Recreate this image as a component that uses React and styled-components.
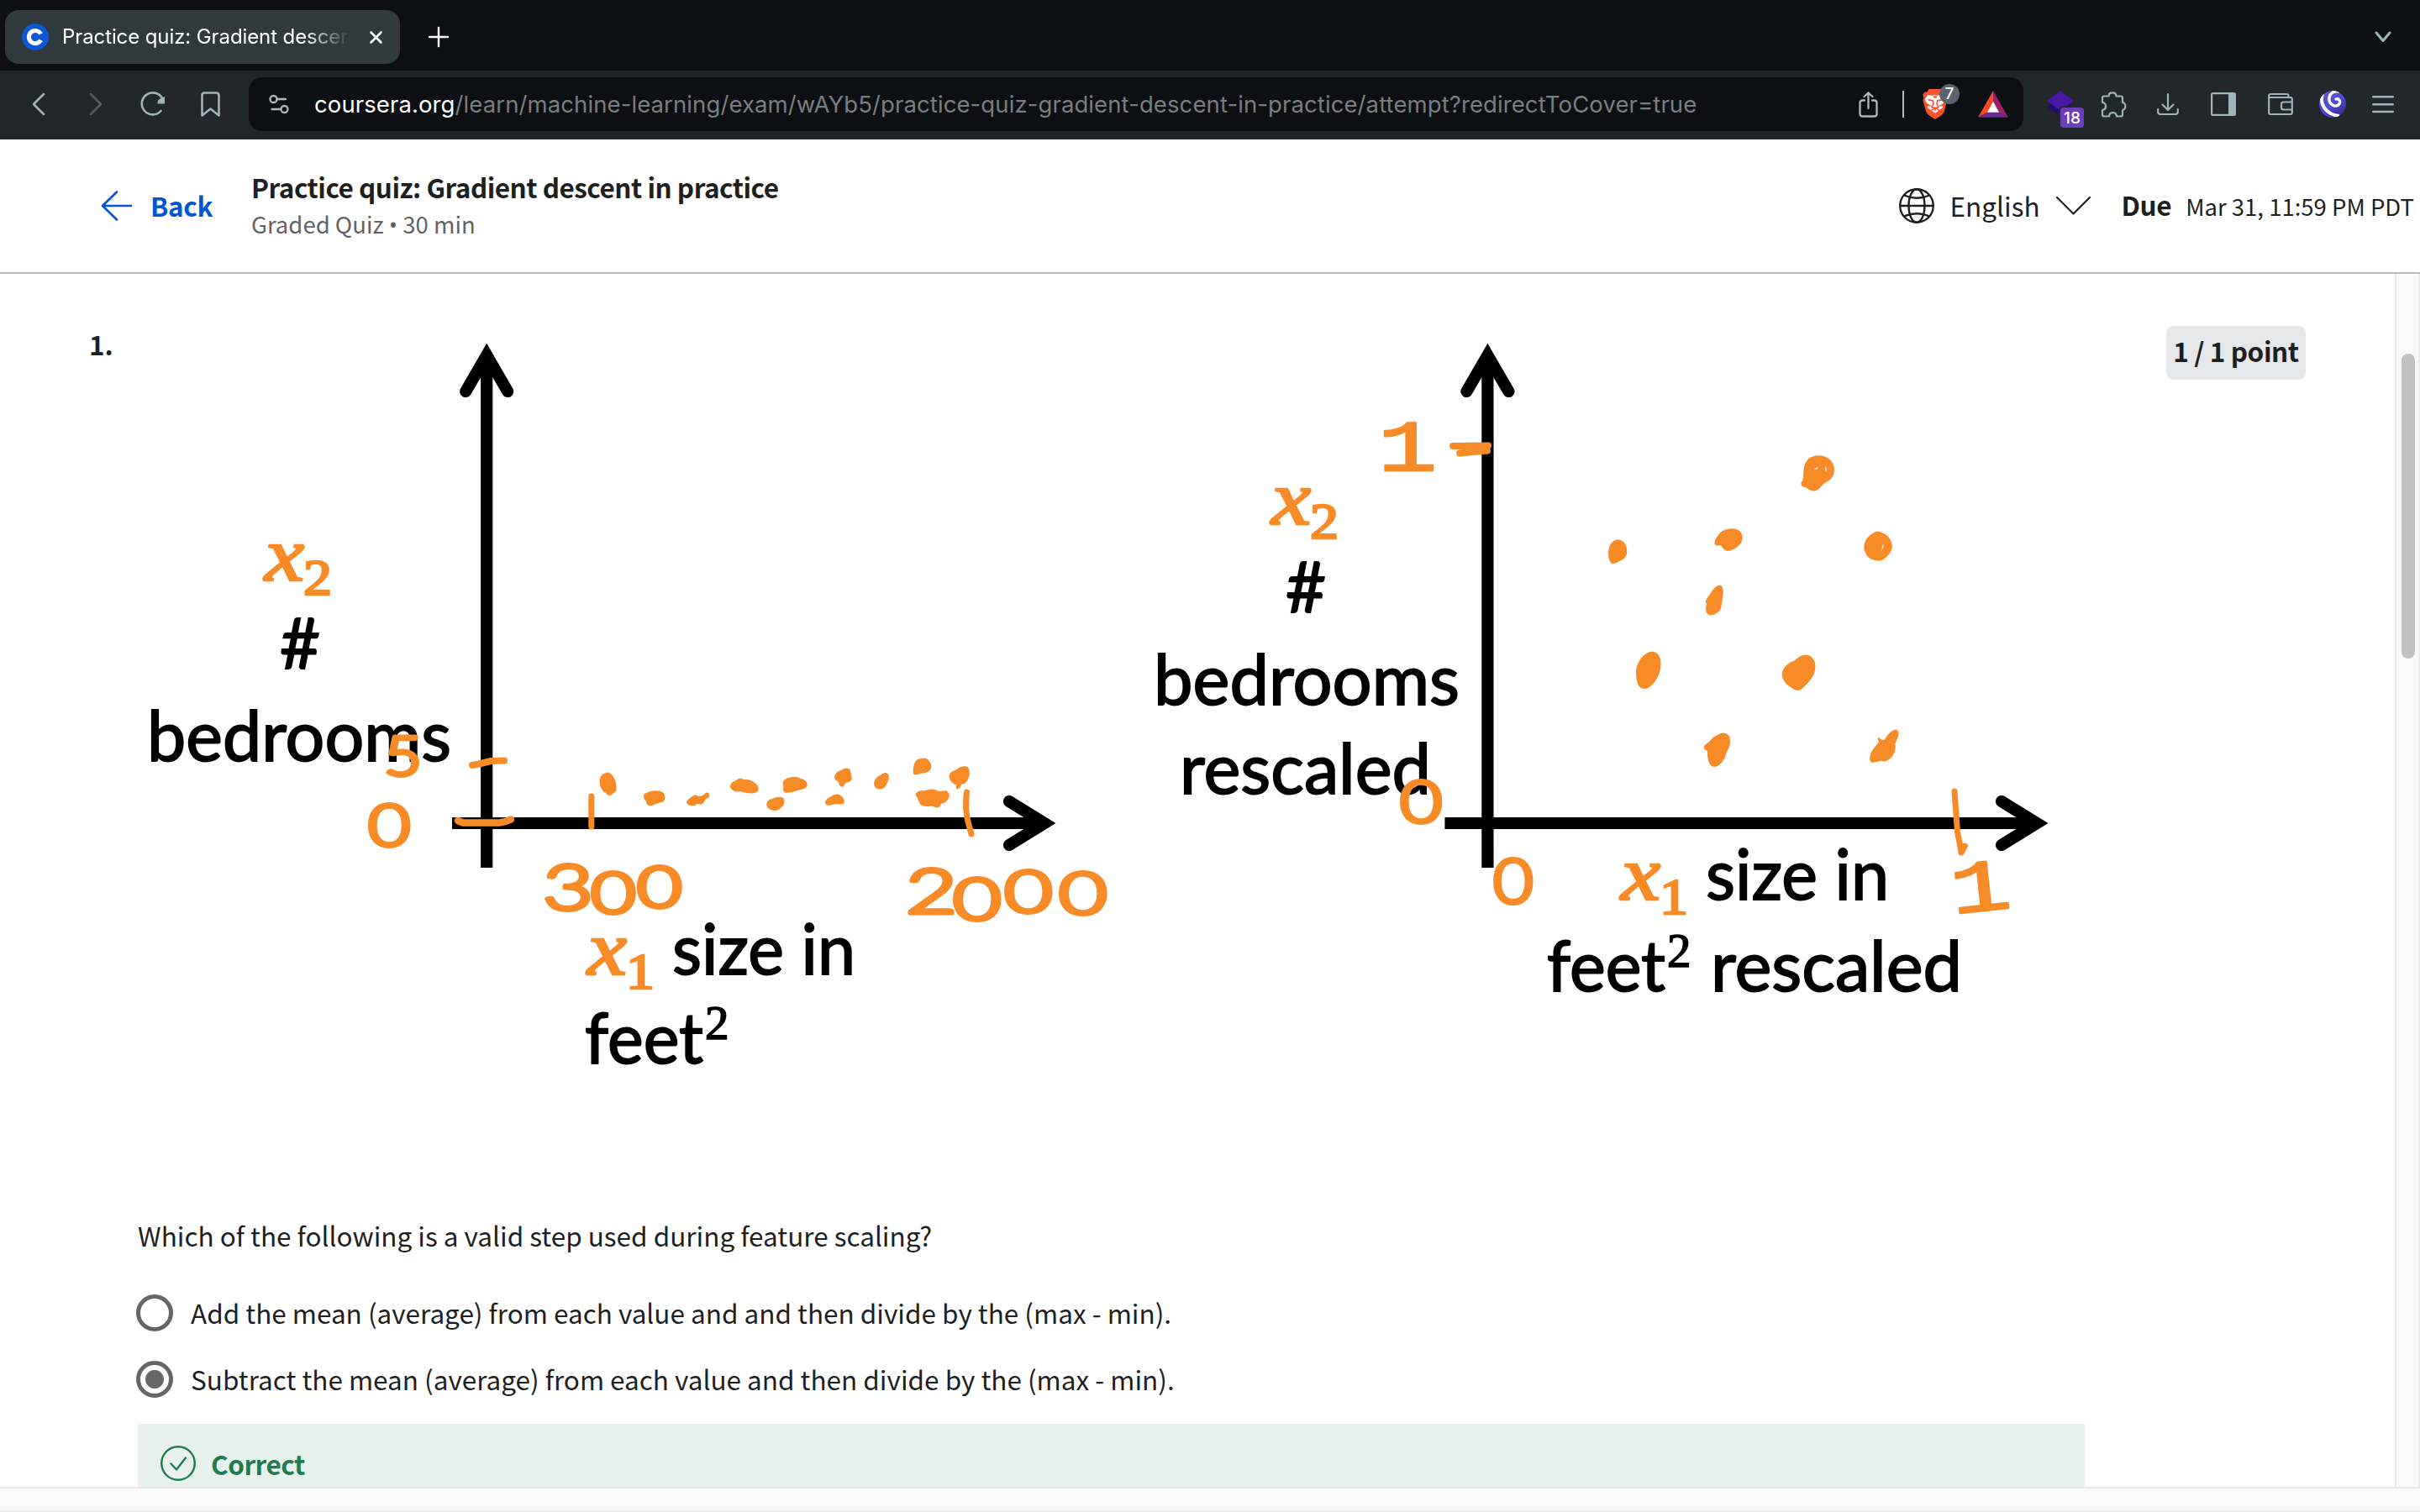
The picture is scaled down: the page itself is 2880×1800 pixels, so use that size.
import React from "react";
import styled, { createGlobalStyle } from "styled-components";

const SANS = '"Noto Sans CJK SC", "Noto Sans", sans-serif';
const CHROME = 'Inter, "Liberation Sans", sans-serif';
const ORANGE = "#f78b28";
const ICON = "#a0b2ba";

const GlobalStyle = createGlobalStyle`
  * { box-sizing: border-box; }
  body { margin: 0; background: #fff; overflow: hidden; }
  svg { display: block; flex: none; overflow: visible; }
`;

const Window = styled.div`
  width: 2880px;
  height: 1800px;
  display: flex;
  flex-direction: column;
  overflow: hidden;
  background: #fff;
  color: #1f1f1f;
  font-family: ${SANS};
`;

/* ---------- browser chrome ---------- */

const TabStrip = styled.div`
  height: 84px;
  flex: none;
  display: flex;
  align-items: center;
  padding: 4px 34px 0 6px;
  background: #0d0f14;
  font-family: ${CHROME};
`;

const Tab = styled.div`
  width: 470px;
  height: 64px;
  display: flex;
  align-items: center;
  padding: 0 20px;
  border-radius: 16px;
  background: #30393e;
`;

const TabTitle = styled.div`
  width: 342px;
  margin: 0 24px 0 16px;
  overflow: hidden;
  white-space: nowrap;
  color: #fff;
  font-size: 24px;
  line-height: 32px;
  letter-spacing: ${(p) => p.$spacing}px;
  mask-image: linear-gradient(to right, #000 84%, transparent 100%);
`;

const NewTab = styled.div`
  margin-left: 34px;
  flex: 1;
`;

const Toolbar = styled.div`
  height: 82px;
  flex: none;
  display: flex;
  align-items: center;
  padding-bottom: 2px;
  background: #22272b;
  font-family: ${CHROME};
`;

const NavButtons = styled.div`
  width: 296px;
  padding-left: 38px;
  display: flex;
  align-items: center;
`;

const Slot = styled.div`
  margin-left: ${(p) => p.$gap || 0}px;
  position: relative;
`;

const AddressBar = styled.div`
  width: 2112px;
  height: 64px;
  display: flex;
  align-items: center;
  padding: 0 18px 0 24px;
  border-radius: 16px;
  background: #0d0f14;
`;

const Url = styled.div`
  flex: 1;
  margin-left: 30px;
  white-space: nowrap;
  color: #7c7d80;
  font-size: 27.5px;
  line-height: 40px;
  letter-spacing: 0.1px;
`;

const Domain = styled.span`
  color: #fff;
`;

const Divider = styled.div`
  width: 2px;
  height: 32px;
  margin: 0 22px 0 29px;
  background: #b4b6b8;
`;

const CountBadge = styled.div`
  position: absolute;
  left: ${(p) => p.$left}px;
  top: ${(p) => p.$top}px;
  width: ${(p) => p.$width}px;
  height: 24px;
  border-radius: ${(p) => p.$radius}px;
  background: ${(p) => p.$color};
  color: #fff;
  font-size: ${(p) => p.$size}px;
  font-weight: 500;
  line-height: ${(p) => p.$line || 24}px;
  text-align: center;
  ${(p) => p.$outline && "box-shadow: 0 0 0 2px #22272b;"}
`;

/* ---------- page header ---------- */

const Header = styled.header`
  height: 160px;
  flex: none;
  display: flex;
  align-items: center;
  padding-left: 120px;
  border-bottom: 2px solid #bbb;
  white-space: nowrap;
`;

const Label = styled.div`
  font-size: ${(p) => p.$size || 31.5}px;
  line-height: ${(p) => p.$line || 44}px;
  font-weight: ${(p) => p.$weight || 400};
  letter-spacing: ${(p) => p.$spacing || 0}px;
  color: ${(p) => p.$color || "#1f1f1f"};
  white-space: nowrap;
`;

const CenteredLabel = styled(Label)`
  padding-bottom: 2px;
`;

const Bullet = styled.span`
  font-family: "Open Sans", sans-serif;
`;

const BackLink = styled.div`
  width: 179px;
  display: flex;
  align-items: center;
  gap: 22px;
`;

const TitleBlock = styled.div`
  flex: 1;
`;

const Language = styled.div`
  display: flex;
  align-items: center;
  gap: 19px;
`;

const Due = styled.div`
  display: flex;
  align-items: baseline;
  gap: 17px;
  margin: 0 7px 0 37px;
`;

/* ---------- quiz body ---------- */

const Body = styled.div`
  flex: 1;
  min-height: 0;
  display: flex;
`;

const Content = styled.main`
  flex: 1;
  min-width: 0;
  display: grid;
  grid-template-columns: 58px 2317px 97px 166px;
  align-items: start;
  align-content: start;
  padding: 62px 0 0 106px;
  overflow: hidden;
`;

const PointBadge = styled.div`
  grid-column: 4;
  height: 64px;
  display: flex;
  align-items: center;
  justify-content: center;
  padding-bottom: 6px;
  border-radius: 8px;
  background: #e5e7e8;
`;

const Question = styled.section`
  grid-column: 2;
  display: flex;
  flex-direction: column;
`;

const Prompt = styled.div`
  margin-top: 60px;
`;

const Options = styled.div`
  display: flex;
  flex-direction: column;
  gap: 35px;
  margin: 49px 0 31px -2px;
`;

const Option = styled.div`
  height: 44px;
  display: flex;
  align-items: center;
  gap: 21px;
`;

const OptionText = styled(Label)`
  padding-bottom: 3px;
`;

const Radio = styled.div`
  width: 44px;
  height: 44px;
  display: flex;
  align-items: center;
  justify-content: center;
  border: 5px solid #666;
  border-radius: 50%;

  &::after {
    content: "";
    width: 22px;
    height: 22px;
    border-radius: 50%;
    background: ${(p) => (p.$checked ? "#666" : "transparent")};
  }
`;

const Feedback = styled.div`
  height: 140px;
  display: flex;
  align-items: flex-start;
  gap: 18px;
  padding: 26px 27px;
  background: #e7f1ed;
`;

const ScrollTrack = styled.div`
  width: 30px;
  padding: 95px 4px 0 6px;
  border-left: 2px solid #e8e8e8;
  border-right: 2px solid #eee;
  background: #fafafa;
`;

const ScrollThumb = styled.div`
  width: 16px;
  height: 363px;
  border-radius: 8px;
  background: #c1c1c1;
`;

const BottomTrack = styled.div`
  height: 30px;
  flex: none;
  border-top: 2px solid #e8e8e8;
  border-bottom: 2px solid #eee;
  background: #fafafa;
`;

/* ---------- icons ---------- */

const Svg = ({ w, h, children, stroke = ICON, sw = 2, box }) => (
  <svg
    width={w}
    height={h}
    viewBox={box || `0 0 ${w} ${h}`}
    fill="none"
    stroke={stroke}
    strokeWidth={sw}
    strokeLinecap="round"
    strokeLinejoin="round"
  >
    {children}
  </svg>
);

const CourseraMark = () => (
  <svg width="32" height="32" viewBox="0 0 32 32">
    <circle cx="16" cy="16" r="16" fill="#0d59d3" />
    <path d="M22.6 12.4A7.6 7.6 0 1 0 22.6 19.8" fill="none" stroke="#fff" strokeWidth="5" />
  </svg>
);

const BraveLion = () => (
  <svg width="30" height="36" viewBox="0 0 88 108">
    <path
      d="M22 0H66L76 11L84 10L88 22L84 32L86 42L76 82Q72 90 64 95L48 106Q44 109 40 106L24 95Q16 90 12 82L0 40L3 32L0 20L8 10L14 11Z"
      fill="#fb542b"
    />
    <path
      d="M18 20L36 23L44 20L52 23L70 20L80 36L77 46L66 56L72 66L60 74L44 86L28 74L16 66L22 56L11 46L8 36Z"
      fill="#fff"
    />
    <path
      d="M19 38L36 42L38 53L32 64L44 70L56 64L50 53L52 42L69 38M44 70V78M28 61L20 57M60 61L68 57M30 76L44 67L58 76"
      fill="none"
      stroke="#fb542b"
      strokeWidth="5"
    />
    <path d="M36 26L44 24L52 26L48 32H40Z" fill="#fb542b" />
  </svg>
);

const BatTriangle = () => (
  <svg width="36" height="32" viewBox="0 0 108 95">
    <path d="M54 0L0 95L34 77L54 37Z" fill="#ff4724" />
    <path d="M54 0L108 95L74 77L54 37Z" fill="#9e1f63" />
    <path d="M0 95H108L74 77H34Z" fill="#662d91" />
    <path d="M54 37L33 77H75Z" fill="#fff" />
  </svg>
);

const Swirl = () => (
  <svg width="32" height="32" viewBox="0 0 96 96">
    <defs>
      <clipPath id="ball">
        <circle cx="48" cy="48" r="48" />
      </clipPath>
      <linearGradient id="ballFill" x1="0" y1="0" x2="0.7" y2="1">
        <stop offset="0" stopColor="#6f4fd0" />
        <stop offset="0.55" stopColor="#4d4fd2" />
        <stop offset="1" stopColor="#3c2a93" />
      </linearGradient>
    </defs>
    <g clipPath="url(#ball)">
      <rect width="96" height="96" fill="url(#ballFill)" />
      <path
        d="M60 30C68 27 75 34 74 42C72 54 56 58 46 50C32 40 32 18 46 8C52 3 60 1 68 3"
        fill="none"
        stroke="#fff"
        strokeWidth="10"
        strokeLinecap="round"
      />
      <path d="M12 12C0 52 28 86 72 90" fill="none" stroke="#fff" strokeWidth="12" />
      <path d="M1 52C6 78 22 92 46 98" fill="none" stroke="#4b43c4" strokeWidth="6" />
    </g>
  </svg>
);

/* ---------- hand-annotated figure ---------- */

const FigureSvg = styled.svg`
  width: 2317px;
  height: 1000px;
`;

const Printed = styled.text`
  font-family: Lato, sans-serif;
  font-size: 83px;
  fill: #000;
  stroke: #000;
  stroke-width: 1.8px;
`;

const MathText = styled.text`
  font-family: "Liberation Serif", serif;
  font-style: ${(p) => (p.$italic ? "italic" : "normal")};
  font-size: ${(p) => p.$size}px;
  fill: ${(p) => p.$color || ORANGE};
  stroke: ${(p) => p.$color || ORANGE};
  stroke-width: ${(p) => (p.$color ? 1.6 : 2.6)}px;
`;

const HandText = styled.text`
  font-family: ${(p) => (p.$base ? '"Liberation Mono", monospace' : "Lato, sans-serif")};
  font-weight: ${(p) => (p.$base ? 400 : 300)};
  font-size: ${(p) => p.$size}px;
  fill: ${ORANGE};
  stroke: ${ORANGE};
  stroke-width: ${(p) => (p.$base ? 2.4 : 5)}px;
  stroke-linejoin: round;
`;

const Word = ({ x, y, w, children }) => (
  <Printed x={x} y={y} textLength={w} lengthAdjust="spacingAndGlyphs">
    {children}
  </Printed>
);

const Variable = ({ x, y, index }) => (
  <g>
    <MathText $italic $size={91} x={x} y={y} textLength={47} lengthAdjust="spacingAndGlyphs">
      x
    </MathText>
    <MathText $size={61} x={x + 46} y={y + 17} textLength={34} lengthAdjust="spacingAndGlyphs">
      {index}
    </MathText>
  </g>
);

/* Handwritten number: one position for each digit, widened by `stretch`. */
const HandNumber = ({ xs, ys, stretch = 1.3, size = 66, base, tilt = 0, lead, children }) => (
  <HandText
    $size={size}
    $base={base}
    transform={`rotate(${tilt} ${xs[0]} ${ys[0]}) scale(${stretch} 1)`}
    x={xs.map((v) => v / stretch).join(" ")}
    y={ys.join(" ")}
  >
    {lead ? (
      <>
        <tspan fontSize={lead}>{children[0]}</tspan>
        {children.slice(1)}
      </>
    ) : (
      children
    )}
  </HandText>
);

const Axes = ({ x, left, right }) => (
  <g fill="none" stroke="#000" strokeWidth="14.2" strokeMiterlimit="10">
    <path d={`M${x} 430V1033`} />
    <path d={`M${left} 980H${right - 20}`} />
    <path d={`M${x - 25} 466L${x} 423L${x + 25} 466`} strokeLinecap="round" />
    <path d={`M${right - 56} 954L${right - 14} 980L${right - 56} 1006`} strokeLinecap="round" />
  </g>
);

const LEFT_DOTS = [
  "M380 238C395 246 401 285 398 305L386 320Q378 322 375 311C360 300 357 258 368 245Z",
  "M470 308Q492 298 503 311Q511 330 502 344Q485 350 476 358Q464 358 465 342Q456 330 461 315Z",
  "M555 341Q560 330 573 319L583 324Q592 322 597 311Q606 309 605 326L596 336Q594 348 587 353L578 351Q572 361 562 356Q553 352 555 341Z",
  "M651 291Q651 275 664 268Q672 253 682 264Q698 262 705 275Q716 284 714 304Q706 316 694 313Q682 312 675 307Q656 310 651 291Z",
  "M732 350Q736 332 746 332Q758 322 770 330Q775 350 766 362Q758 378 746 374Q732 368 732 350Z",
  "M770 290Q764 264 782 258Q796 250 808 260Q824 266 823 286Q816 302 802 302Q788 312 774 311Q766 304 770 290Z",
  "M883 252Q888 234 897 232Q908 218 918 228Q920 244 922 262Q918 276 908 276L902 290Q893 290 892 272Q882 266 883 252Z",
  "M862 346Q864 332 876 324Q888 312 896 320Q908 332 904 350Q896 354 884 351Q874 358 865 355Z",
  "M971 276Q974 254 985 249Q996 232 1003 246Q1006 262 1000 276Q998 292 987 298Q970 300 971 276Z",
  "M1058 226Q1060 194 1072 190Q1086 184 1092 194Q1102 212 1096 230Q1088 242 1074 242Q1064 250 1058 244Z",
  "M1138 256Q1136 238 1152 230Q1168 210 1180 220Q1186 244 1180 262Q1176 280 1165 282Q1162 296 1155 299Q1152 294 1154 284Q1140 274 1138 256Z",
  "M1063 318Q1066 302 1084 304Q1104 292 1114 306L1132 304Q1142 318 1136 332Q1130 350 1120 350Q1116 368 1108 364Q1100 356 1094 360Q1076 362 1072 348Q1070 334 1063 318Z",
];

const RIGHT_DOTS = [
  "M697 500C700 460 730 450 756 456C790 466 798 500 788 522C780 540 760 544 752 556C740 576 722 578 706 562L692 557Q684 548 694 536Z",
  "M419 748Q420 732 430 722C440 700 470 694 488 700C510 710 510 734 500 748C488 764 470 774 456 772Q444 766 440 754L424 754Z",
  "M89 785C88 756 98 740 115 735C135 732 146 750 147 770C148 790 138 802 124 806Q112 818 100 814Q90 808 89 785Z",
  "M884 762C884 740 896 722 914 712Q926 702 940 712C960 718 972 740 972 760C968 780 952 800 934 805C912 804 890 800 884 762Z",
  "M391 942L396 930Q404 918 410 908Q424 884 438 887C450 894 446 924 442 944Q440 970 432 975L418 985Q404 992 394 978Q390 964 395 950Z",
  "M175 1180C174 1150 196 1110 226 1108C252 1110 258 1146 248 1178C238 1210 216 1234 200 1232C182 1230 176 1210 175 1180Z",
  "M629 1184C630 1160 650 1144 668 1138C684 1120 702 1114 716 1122C736 1134 736 1164 728 1184C716 1210 700 1224 688 1234Q676 1242 664 1232C646 1222 630 1206 629 1184Z",
  "M386 1424Q394 1414 404 1408Q412 1392 430 1385Q450 1372 464 1388C472 1410 466 1430 456 1444C452 1470 434 1494 416 1492C400 1488 397 1462 397 1440Q386 1436 386 1424Z",
  "M902 1462C904 1440 920 1424 930 1410L926 1396Q934 1392 938 1402L948 1402C956 1386 972 1368 984 1368Q996 1374 990 1392L981 1416C986 1444 968 1472 946 1474L936 1472Q920 1478 908 1478Q902 1474 902 1462Z",
];

const Figure = () => (
  <FigureSvg viewBox="164 388 2317 1000">
    <Axes x={579.2} left={538} right={1257} />
    <Axes x={1770.4} left={1719.4} right={2438} />

    <Variable x={315} y={690.5} index="2" />
    <Word x={333} y={796} w={48}>#</Word>
    <Word x={175} y={906} w={362}>bedrooms</Word>
    <Variable x={699} y={1160} index="1" />
    <Word x={800} y={1160} w={218}>size in</Word>
    <Word x={696} y={1265.5} w={141}>feet</Word>
    <MathText $color="#000" $size={57} x={839} y={1236.5}>2</MathText>

    <Variable x={1513} y={623.5} index="2" />
    <Word x={1530} y={729} w={48}>#</Word>
    <Word x={1373} y={838.5} w={364}>bedrooms</Word>
    <Word x={1404} y={944.5} w={299}>rescaled</Word>
    <Variable x={1929} y={1070.5} index="1" />
    <Word x={2030} y={1070.5} w={218}>size in</Word>
    <Word x={1841} y={1180} w={141}>feet</Word>
    <MathText $color="#000" $size={57} x={1984} y={1151}>2</MathText>
    <Word x={2036} y={1180} w={299}>rescaled</Word>

    <g fill={ORANGE}>
      <g transform="translate(520 840) scale(0.5357 0.33333)">
        {LEFT_DOTS.map((d) => (
          <path key={d} d={d} />
        ))}
      </g>
      <g transform="translate(1880 380) scale(0.38265 0.35714)">
        {RIGHT_DOTS.map((d) => (
          <path key={d} d={d} />
        ))}
      </g>
    </g>
    <path d="M2159 558l4-2 1 2-4 1zM2172 554q3 4 1 8l-1-3zM2241 647q2 5-3 10 2-4 2-7z" fill="#fde0c2" />

    <g fill="none" stroke={ORANGE} strokeWidth="8" strokeLinecap="round" strokeLinejoin="round">
      <path d="M562 911L570 909.5L584 906L600 905.5" />
      <path d="M545 977L551 979.5L594 979.5Q601 979 608 975.5" strokeWidth="8.5" />
      <path d="M703.8 948L703.8 984" strokeWidth="7" />
      <path d="M1150.5 943Q1148 963 1152 978L1156 993" strokeWidth="7" />
      <path d="M1729 531L1771 530.5M1737 539.5L1770 536.5" />
      <path d="M2326 942L2329.5 990L2334 1015L2338.5 1007L2334 1008" strokeWidth="7" />
    </g>

    <HandNumber xs={[457]} ys={[923]} stretch={1.2} size={65}>5</HandNumber>
    <HandNumber xs={[438]} ys={[1007.5]} stretch={1.28} size={68}>0</HandNumber>
    <HandNumber xs={[646, 703, 758]} ys={[1083, 1087, 1080]} stretch={1.4} size={66} lead={74}>300</HandNumber>
    <HandNumber xs={[1078, 1134, 1195, 1260]} ys={[1087, 1095, 1086, 1088]} stretch={1.44} size={69} lead={73}>
      2000
    </HandNumber>
    <HandNumber xs={[1640]} ys={[560]} stretch={1.36} size={86} base>1</HandNumber>
    <HandNumber xs={[1666]} ys={[979]} stretch={1.26} size={69}>0</HandNumber>
    <HandNumber xs={[1777]} ys={[1075]} stretch={1.14} size={72}>0</HandNumber>
    <HandNumber xs={[2324]} ys={[1088]} stretch={1.36} size={88} tilt={-6} base>1</HandNumber>
  </FigureSvg>
);

export default function App() {
  return (
    <Window>
      <GlobalStyle />
      <TabStrip>
        <Tab>
          <CourseraMark />
          <TabTitle $spacing={-0.1}>Practice quiz: Gradient descent</TabTitle>
          <Svg w={15} h={15} stroke="#fff" sw={2.6}>
            <path d="M1.5 1.5L13.5 13.5M13.5 1.5L1.5 13.5" />
          </Svg>
        </Tab>
        <NewTab>
          <Svg w={24} h={24} stroke="#fff" sw={2.4}>
            <path d="M12 1V23M1 12H23" />
          </Svg>
        </NewTab>
        <Svg w={20} h={14} sw={3}>
          <path d="M2 2L10 11.5L18 2" />
        </Svg>
      </TabStrip>

      <Toolbar>
        <NavButtons>
          <Svg w={16} h={28} sw={2.6}>
            <path d="M14 2L2 14L14 26" />
          </Svg>
          <Slot $gap={52}>
            <Svg w={16} h={28} sw={2.6} stroke="#565e63">
              <path d="M2 2L14 14L2 26" />
            </Svg>
          </Slot>
          <Slot $gap={45}>
            <Svg w={30} h={30} sw={2.6}>
              <path d="M24.5 23A13 13 0 1 1 27.3 11" />
              <path d="M29 6V14.5H20.5Q20 9 25 8Z" fill={ICON} stroke="none" />
            </Svg>
          </Slot>
          <Slot $gap={42}>
            <Svg w={23} h={30} sw={2.6}>
              <path d="M1.5 4.5Q1.5 1.5 4.5 1.5H18.5Q21.5 1.5 21.5 4.5V28.5L11.5 20.5L1.5 28.5Z" />
            </Svg>
          </Slot>
        </NavButtons>
        <AddressBar>
          <Svg w={24} h={24} stroke="#b4b6b8" sw={2.3}>
            <circle cx="5.5" cy="6" r="4" />
            <path d="M9.5 6H20M3.5 18H14" />
            <circle cx="18.5" cy="18" r="4" />
          </Svg>
          <Url>
            <Domain>coursera.org</Domain>
            /learn/machine-learning/exam/wAYb5/practice-quiz-gradient-descent-in-practice/attempt?redirectToCover=true
          </Url>
          <Svg w={23} h={31} stroke="#b4b6b8" sw={2.3}>
            <path d="M7 10.5H4.5Q1.5 10.5 1.5 13.5V26.5Q1.5 29.5 4.5 29.5H18.5Q21.5 29.5 21.5 26.5V13.5Q21.5 10.5 18.5 10.5H16M11.5 20V1.5M6.5 6L11.5 1.5L16.5 6" />
          </Svg>
          <Divider />
          <Slot>
            <BraveLion />
            <CountBadge $left={20} $top={-6} $width={24} $radius={12} $color="#5e6170" $size={19}>
              7
            </CountBadge>
          </Slot>
          <Slot $gap={36}>
            <BatTriangle />
          </Slot>
        </AddressBar>
        <Slot $gap={28}>
          <svg width="32" height="32" viewBox="0 0 32 32">
            <path d="M0 19L6 15H26L32 19L16 31Z" fill="#1f0c6e" />
            <path d="M16 0L32 12L16 24L0 12Z" fill="#4518a5" />
          </svg>
          <CountBadge $left={16} $top={20} $width={28} $radius={4} $color="#6b3fbc" $size={19} $line={26} $outline>
            18
          </CountBadge>
        </Slot>
        <Slot $gap={32}>
          <Svg w={30} h={31} sw={2.2}>
            <path d="M4 5.5H9.5Q9.5 1.3 14 1.3Q18.5 1.3 18.5 5.5H24Q26 5.5 26 7.5V13Q29.3 13.5 29.3 17.5Q29.3 21.5 26 22V27.5Q26 29.5 24 29.5H19Q18.5 25 14.5 25Q10.5 25 10 29.5H4Q2 29.5 2 27.5V22Q6 21.5 6 17.5Q6 13.5 2 13V7.5Q2 5.5 4 5.5Z" />
          </Svg>
        </Slot>
        <Slot $gap={37}>
          <Svg w={26} h={26} sw={2.2}>
            <path d="M13 1V20M6.5 13.5L13 20L19.5 13.5M1.2 19V22Q1.2 25 4.2 25H21.8Q24.8 25 24.8 22V19" />
          </Svg>
        </Slot>
        <Slot $gap={38}>
          <Svg w={30} h={28} sw={2.2}>
            <rect x="1.1" y="1.1" width="27.8" height="25.8" rx="1.5" />
            <rect x="21" y="1" width="8" height="26" fill={ICON} stroke="none" />
          </Svg>
        </Slot>
        <Slot $gap={38}>
          <Svg w={30} h={26} sw={2.2}>
            <path d="M28.8 10V7Q28.8 5 26.8 5H1.2M28.8 20V23Q28.8 25 26.8 25H3.2Q1.2 25 1.2 23V3Q1.2 1 3.2 1H22.5Q24.5 1 24.5 3V5M28.8 10.5H18.5Q16 10.5 16 13V17Q16 19.5 18.5 19.5H28.8Z" />
          </Svg>
        </Slot>
        <Slot $gap={31}>
          <Swirl />
        </Slot>
        <Slot $gap={31}>
          <Svg w={26} h={20} sw={2.4}>
            <path d="M1.2 1.2H24.8M1.2 10.2H24.8M1.2 19H24.8" />
          </Svg>
        </Slot>
      </Toolbar>

      <Header>
        <BackLink>
          <Svg w={37} h={36} stroke="#0056d2" sw={2.6}>
            <path d="M19 1.5L2 18L19 34.5M2 18H36" />
          </Svg>
          <CenteredLabel $weight={700} $color="#0056d2" $spacing={-0.4}>
            Back
          </CenteredLabel>
        </BackLink>
        <TitleBlock>
          <Label $weight={700} $spacing={-0.5} $line={43}>
            Practice quiz: Gradient descent in practice
          </Label>
          <Label $size={27.5} $line={45} $color="#636363">
            Graded Quiz <Bullet>•</Bullet> 30 min
          </Label>
        </TitleBlock>
        <Language>
          <Svg w={42} h={42} stroke="#1f1f1f" sw={2.4}>
            <circle cx="21" cy="21" r="19.8" />
            <ellipse cx="21" cy="21" rx="9.5" ry="19.8" />
            <path d="M1.5 21H40.5M6 8.5Q21 15 36 8.5M6 33.5Q21 27 36 33.5" />
          </Svg>
          <CenteredLabel>English</CenteredLabel>
          <Svg w={41} h={22} stroke="#1f1f1f" sw={2.2}>
            <path d="M1 1L20.5 20.5L40 1" />
          </Svg>
        </Language>
        <Due>
          <CenteredLabel $weight={700} $spacing={-0.4}>Due</CenteredLabel>
          <CenteredLabel $size={27.5}>Mar 31, 11:59 PM PDT</CenteredLabel>
        </Due>
      </Header>

      <Body>
        <Content>
          <Label $weight={700} $line={42}>1.</Label>
          <Question>
            <Figure />
            <Prompt>
              <Label>Which of the following is a valid step used during feature scaling?</Label>
            </Prompt>
            <Options>
              <Option>
                <Radio />
                <OptionText>Add the mean (average) from each value and and then divide by the (max - min).</OptionText>
              </Option>
              <Option>
                <Radio $checked />
                <OptionText>Subtract the mean (average) from each value and then divide by the (max - min).</OptionText>
              </Option>
            </Options>
            <Feedback>
              <Svg w={42} h={42} stroke="#1d7c50" sw={2.4}>
                <circle cx="21" cy="21" r="19.8" />
                <path d="M12.5 21.5L19 28.5L30 14.5" />
              </Svg>
              <Label $weight={700} $color="#1d7c50" $spacing={-0.5} $line={42}>
                Correct
              </Label>
            </Feedback>
          </Question>
          <PointBadge>
            <Label $weight={700} $spacing={-0.4}>1 / 1 point</Label>
          </PointBadge>
        </Content>
        <ScrollTrack>
          <ScrollThumb />
        </ScrollTrack>
      </Body>
      <BottomTrack />
    </Window>
  );
}
